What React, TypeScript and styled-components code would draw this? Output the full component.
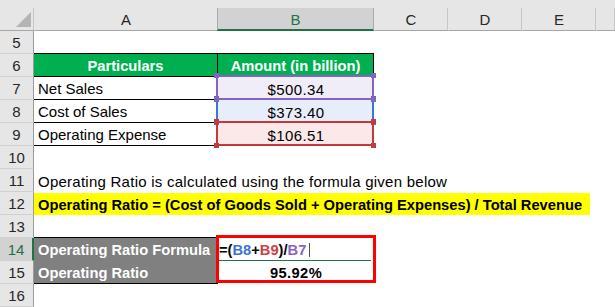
import * as React from 'react';
import styled, { createGlobalStyle } from 'styled-components';

type Tone = 'purple' | 'blue' | 'red';

const TONES: Record<Tone, { line: string; fill: string; text: string; layer: number }> = {
  purple: { line: '#8562c3', fill: '#f0edf8', text: '#8a62c8', layer: 2 },
  blue: { line: '#3c76d3', fill: '#e8eef9', text: '#3b73d1', layer: 1 },
  red: { line: '#c4393e', fill: '#fbe9ea', text: '#cf3d44', layer: 2 },
};

const GlobalStyle = createGlobalStyle`
  html, body {
    margin: 0;
    padding: 0;
    background: #ffffff;
  }
  body {
    font-family: 'Liberation Sans', Arial, sans-serif;
  }
`;

const Sheet = styled.div`
  display: grid;
  grid-template-columns: 34px 184px 156px 74px 74px 74px 1fr;
  grid-template-rows: 31px repeat(12, 23px);
  width: 615px;
  height: 307px;
  overflow: hidden;
  background: #e6e6e6;
  font-family: 'Liberation Sans', Arial, sans-serif;
  font-size: 15px;
  color: #000;
`;

const Corner = styled.div`
  display: flex;
  align-items: flex-end;
  justify-content: flex-end;
  padding: 0 3px 3px 0;
  border-bottom: 1px solid #a6a6a6;
  background-image: linear-gradient(#c6c6c6, #c6c6c6);
  background-size: 1px 22px;
  background-position: right bottom;
  background-repeat: no-repeat;
`;

const ColHead = styled.div<{ $active?: boolean }>`
  align-self: end;
  height: 23px;
  box-sizing: border-box;
  display: flex;
  align-items: center;
  justify-content: center;
  padding-top: ${p => (p.$active ? '1px' : '0')};
  background: ${p => (p.$active ? '#d2d2d2' : '#e6e6e6')};
  color: ${p => (p.$active ? '#217346' : '#262626')};
  border-left: 1px solid ${p => (p.$active ? '#ababab' : 'transparent')};
  margin-left: ${p => (p.$active ? '-1px' : '0')};
  border-right: 1px solid ${p => (p.$active ? '#ababab' : '#c6c6c6')};
  border-bottom: ${p => (p.$active ? '2px solid #217346' : '1px solid #a6a6a6')};
`;

const RowHead = styled.div<{ $active?: boolean }>`
  display: flex;
  align-items: center;
  justify-content: center;
  padding-top: 1px;
  background: ${p => (p.$active ? '#d2d2d2' : '#e6e6e6')};
  color: ${p => (p.$active ? '#217346' : '#262626')};
  border-right: ${p => (p.$active ? '2px solid #217346' : '1px solid #9b9b9b')};
  border-bottom: 1px solid #d0d0d0;
`;

const Cell = styled.div<{ $span?: number }>`
  grid-column: span ${p => p.$span ?? 1};
  position: relative;
  display: flex;
  align-items: center;
  min-width: 0;
  padding: 1px 4px 0;
  background: #ffffff;
  white-space: nowrap;
`;

const HeadCell = styled(Cell)`
  justify-content: center;
  background: #00b050;
  color: #ffffff;
  font-size: 14.7px;
  font-weight: 700;
  border-right: 1px solid #000;
  border-bottom: 1px solid #000;
  box-shadow: 0 -1px 0 #000;
`;

const LabelCell = styled(Cell)`
  border-bottom: 1px solid #000;
`;

const NoteCell = styled(Cell)`
  letter-spacing: 0.25px;
`;

const RefCell = styled(Cell)<{ $tone: Tone }>`
  justify-content: center;
  background: ${p => TONES[p.$tone].fill};
  letter-spacing: 0.4px;
`;

const RefFrame = styled.span<{ $tone: Tone }>`
  position: absolute;
  top: -2px;
  left: -2px;
  right: 0;
  bottom: 0;
  border: 2px solid ${p => TONES[p.$tone].line};
  z-index: ${p => TONES[p.$tone].layer};
  pointer-events: none;
`;

const Handle = styled.span<{ $tone: Tone; $v: 'top' | 'bottom'; $h: 'left' | 'right' }>`
  position: absolute;
  width: 5px;
  height: 5px;
  background: ${p => TONES[p.$tone].line};
  ${p => p.$v}: -4px;
  ${p => p.$h}: -4px;
`;

const Marker = styled.span`
  flex: none;
  align-self: stretch;
  display: flex;
  align-items: center;
  width: 556px;
  box-sizing: border-box;
  margin-left: -4px;
  padding: 1px 4px 0;
  background: #ffff00;
  font-size: 14.7px;
  font-weight: 700;
`;

const GrayCell = styled(Cell)<{ $edge: 'top' | 'bottom' }>`
  background: #808080;
  color: #ffffff;
  font-size: 14.7px;
  font-weight: 700;
  box-shadow: ${p => (p.$edge === 'top' ? '0 -1px 0 #000' : 'none')};
  border-bottom: ${p => (p.$edge === 'bottom' ? '1px solid #000' : '0')};
`;

const FormulaCell = styled(Cell)`
  padding-left: 1px;
  font-size: 14.7px;
  font-weight: 700;

  &::after {
    content: '';
    position: absolute;
    left: 0;
    right: 3px;
    bottom: -1px;
    height: 2px;
    background: #217346;
  }
`;

const ResultCell = styled(Cell)`
  justify-content: center;
  font-size: 14.7px;
  font-weight: 700;
  letter-spacing: 0.4px;
`;

const Ref = styled.span<{ $tone: Tone }>`
  color: ${p => TONES[p.$tone].text};
`;

const Caret = styled.span`
  display: inline-block;
  width: 1px;
  height: 14px;
  margin-left: 3px;
  background: #555;
`;

/* thick red outline over B14:B15, anchored to B14 */
const RedBox = styled.span`
  position: absolute;
  top: -3px;
  left: -2px;
  right: -2px;
  height: 48px;
  box-sizing: border-box;
  border: 3px solid #ff0000;
  z-index: 3;
  pointer-events: none;
`;

const COLUMNS = ['A', 'B', 'C', 'D', 'E', ''];

const ITEMS: { row: number; label: string; value: string; tone: Tone }[] = [
  { row: 7, label: 'Net Sales', value: '$500.34', tone: 'purple' },
  { row: 8, label: 'Cost of Sales', value: '$373.40', tone: 'blue' },
  { row: 9, label: 'Operating Expense', value: '$106.51', tone: 'red' },
];

function BlankRow({ n }: { n: number }): React.ReactElement {
  return (
    <>
      <RowHead>{n}</RowHead>
      <Cell $span={6} />
    </>
  );
}

export default function App(): React.ReactElement {
  return (
    <>
      <GlobalStyle />
      <Sheet>
        <Corner>
          <svg width="15" height="15" viewBox="0 0 15 15">
            <polygon points="0,15 15,0 15,15" fill="#b4b4b4" />
          </svg>
        </Corner>
        {COLUMNS.map(c => (
          <ColHead key={c || 'F'} $active={c === 'B'}>
            {c}
          </ColHead>
        ))}

        <BlankRow n={5} />

        <RowHead>6</RowHead>
        <HeadCell>Particulars</HeadCell>
        <HeadCell>Amount (in billion)</HeadCell>
        <Cell $span={4} />

        {ITEMS.map(item => (
          <React.Fragment key={item.row}>
            <RowHead>{item.row}</RowHead>
            <LabelCell>{item.label}</LabelCell>
            <RefCell $tone={item.tone}>
              {item.value}
              <RefFrame $tone={item.tone}>
                <Handle $tone={item.tone} $v="top" $h="left" />
                <Handle $tone={item.tone} $v="top" $h="right" />
                <Handle $tone={item.tone} $v="bottom" $h="left" />
                <Handle $tone={item.tone} $v="bottom" $h="right" />
              </RefFrame>
            </RefCell>
            <Cell $span={4} />
          </React.Fragment>
        ))}

        <BlankRow n={10} />

        <RowHead>11</RowHead>
        <NoteCell $span={6}>Operating Ratio is calculated using the formula given below</NoteCell>

        <RowHead>12</RowHead>
        <Cell $span={6}>
          <Marker>Operating Ratio = (Cost of Goods Sold + Operating Expenses) / Total Revenue</Marker>
        </Cell>

        <BlankRow n={13} />

        <RowHead $active>14</RowHead>
        <GrayCell $edge="top">Operating Ratio Formula</GrayCell>
        <FormulaCell>
          =(<Ref $tone="blue">B8</Ref>+<Ref $tone="red">B9</Ref>)/<Ref $tone="purple">B7</Ref>
          <Caret />
          <RedBox />
        </FormulaCell>
        <Cell $span={4} />

        <RowHead>15</RowHead>
        <GrayCell $edge="bottom">Operating Ratio</GrayCell>
        <ResultCell>95.92%</ResultCell>
        <Cell $span={4} />

        <BlankRow n={16} />
      </Sheet>
    </>
  );
}
